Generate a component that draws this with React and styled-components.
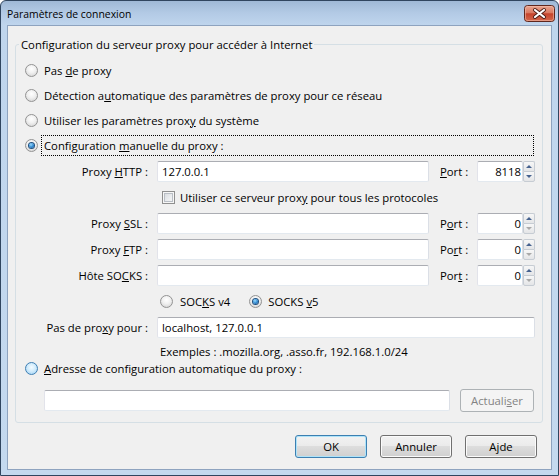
import React from "react";
import styled, { createGlobalStyle } from "styled-components";

const GlobalStyle = createGlobalStyle`
  html, body { margin: 0; padding: 0; background: #ffffff; }
  body {
    font-family: "Open Sans", "Noto Sans", "DejaVu Sans", sans-serif;
    font-size: 11.3px;
    color: #000000;
  }
  * { box-sizing: border-box; }
`;

// window chrome
const Window = styled.div`
  width: 559px;
  height: 476px;
  display: flex;
  flex-direction: column;
  border: 1px solid #30455f;
  border-radius: 6px 6px 0 0;
  padding: 0 6px 5px 6px;
  background: linear-gradient(180deg, #9fb8d6 0px, #b3cae5 12px, #bfd5ed 24px, #c4d9ef 100%);
`;

const TitleBar = styled.div`
  height: 24px;
  display: flex;
  align-items: flex-start;
  justify-content: space-between;
`;

const Title = styled.span`
  padding-top: 6px;
  line-height: 14px;
  font-size: 10.4px;
`;

const CloseButton = styled.div`
  flex: none;
  margin-top: 4px;
  margin-right: -3px;
  width: 31px;
  height: 17px;
  line-height: 0;
`;

const Client = styled.div`
  flex: 1;
  display: flex;
  flex-direction: column;
  background: #f0f0f0;
  border: 1px solid #8ea3bf;
`;

// group box
const GroupBox = styled.fieldset`
  margin: 11px 8px 0 7px;
  padding: 0 0 10px 0;
  min-width: 0;
  border: 1px solid #d5dfe5;
  border-radius: 3px;
`;

const Legend = styled.legend`
  margin-left: 3px;
  padding: 0 2px;
  line-height: 15px;
`;

const Inner = styled.div`
  padding: 6px 0 0 9px;
`;

const OptionRow = styled.div`
  height: ${(p) => p.$h || 25}px;
  display: flex;
  align-items: center;
`;

const OptionLabel = styled.span`
  margin-left: 3px;
  padding: 1px 2px;
  line-height: 17px;
  border: 1px dotted ${(p) => (p.$focus ? "#000000" : "transparent")};
  ${(p) => p.$focus && "flex: 1; margin-right: 8px;"}
`;

const RadioMark = styled.span`
  flex: none;
  position: relative;
  width: 13px;
  height: 13px;
  border-radius: 50%;
  border: 1px solid ${(p) => (p.$hot ? "#3f7fb3" : "#939393")};
  background: ${(p) =>
    p.$hot
      ? "radial-gradient(circle at 50% 40%, #f4fbff 0, #d2ecfc 45%, #98cef3 100%)"
      : "radial-gradient(circle at 50% 35%, #ffffff 0, #f0f0f0 45%, #cdcdcd 100%)"};
  &::after {
    content: "";
    display: ${(p) => (p.$checked ? "block" : "none")};
    position: absolute;
    left: 3px;
    top: 3px;
    width: 5px;
    height: 5px;
    border-radius: 50%;
    background: radial-gradient(circle at 40% 35%, #9bdcff 0, #2d86cf 55%, #0f4a86 100%);
    box-shadow: 0 0 0 1px #21507f;
  }
`;

const CheckMark = styled.span`
  flex: none;
  width: 13px;
  height: 13px;
  border: 1px solid #8f8f8f;
  background: linear-gradient(135deg, #d3d6db 0%, #eceef0 60%, #f8f8f8 100%);
  box-shadow: inset 0 0 0 1px #f6f6f6, inset 0 0 0 2px #b9bec5;
`;

const Key = styled.u`
  text-decoration: underline;
  text-underline-offset: 1px;
`;

// manual proxy grid
const ProxyGrid = styled.div`
  margin-top: 3px;
  display: grid;
  grid-template-columns: 125px 272px 34px 58px;
  grid-template-rows: repeat(7, 21px) 16px;
  column-gap: 7px;
  row-gap: 5px;
  align-items: center;
`;

const FieldLabel = styled.span`
  justify-self: end;
  padding-right: 2px;
`;

const PortLabel = styled.span`
  padding-left: 4px;
`;

const Field = styled.input`
  width: ${(p) => (p.$w ? `${p.$w}px` : "100%")};
  height: 21px;
  margin: 0;
  padding: 0 ${(p) => (p.$align === "right" ? 1 : 4)}px 0 4px;
  font: inherit;
  color: #000000;
  text-align: ${(p) => p.$align || "left"};
  background: #ffffff;
  border: 1px solid;
  border-color: #abadb3 #dbdfe6 #e3e9ef #e2e3ea;
  border-radius: 2px;
  outline: none;
`;

const Span = styled.div`
  grid-column: 2 / span 3;
  display: flex;
  align-items: center;
  padding-left: ${(p) => p.$pad || 0}px;
  gap: ${(p) => p.$gap || 0}px;
`;

const Choice = styled.span`
  display: flex;
  align-items: center;
  gap: ${(p) => p.$gap || 7}px;
`;

const PortBox = styled.div`
  display: flex;
  height: 21px;
`;

const Spinner = styled.div`
  width: 12px;
  display: flex;
  flex-direction: column;
`;

const SpinHalf = styled.div`
  flex: 1;
  display: flex;
  align-items: center;
  justify-content: center;
  border: 1px solid #c6ccd3;
  ${(p) => (p.$up ? "border-bottom: none; border-radius: 2px 2px 0 0;" : "border-radius: 0 0 2px 2px;")}
  background: linear-gradient(180deg, #f7f7f7, #e4e5e7);
  &::after {
    content: "";
    border-left: 3px solid transparent;
    border-right: 3px solid transparent;
    ${(p) =>
      p.$up
        ? `border-bottom: 3px solid ${p.$off ? "#a9a9a9" : "#46628f"};`
        : `border-top: 3px solid ${p.$off ? "#a9a9a9" : "#46628f"};`}
  }
`;

const UrlRow = styled.div`
  margin-top: 12px;
  padding-left: 19px;
  display: flex;
  align-items: center;
  gap: 10px;
  height: 23px;
`;

const Button = styled.button`
  width: ${(p) => p.$w || 72}px;
  height: 23px;
  padding: 0;
  font: inherit;
  color: #000000;
  border: 1px solid ${(p) => (p.$default ? "#3c7fb1" : "#707070")};
  border-radius: 3px;
  background: linear-gradient(180deg, #f2f2f2 0%, #ebebeb 46%, #dddddd 50%, #cfcfcf 100%);
  box-shadow: inset 0 0 0 1px ${(p) => (p.$default ? "#aee3f9" : "#fbfbfb")};
  &:disabled {
    color: #838383;
    border-color: #adb2b5;
    background: #f4f4f4;
    box-shadow: none;
  }
`;

const ButtonBar = styled.div`
  margin-top: 12px;
  padding-right: 14px;
  display: flex;
  justify-content: flex-end;
  gap: 13px;
`;

function Radio({ checked, hot, children, focus, h }) {
  return (
    <OptionRow $h={h}>
      <RadioMark $checked={checked} $hot={hot} />
      <OptionLabel $focus={focus}>{children}</OptionLabel>
    </OptionRow>
  );
}

function Port({ value, zero }) {
  return (
    <PortBox>
      <Field $w={46} $align="right" defaultValue={value} />
      <Spinner>
        <SpinHalf $up />
        <SpinHalf $off={zero} />
      </Spinner>
    </PortBox>
  );
}

function CloseGlyph() {
  return (
    <svg width="31" height="17" viewBox="0 0 31 17">
      <defs>
        <linearGradient id="closeFace" x1="0" y1="0" x2="0" y2="1">
          <stop offset="0" stopColor="#eaa792" />
          <stop offset="0.45" stopColor="#d97a62" />
          <stop offset="0.52" stopColor="#c5432b" />
          <stop offset="1" stopColor="#d46a4e" />
        </linearGradient>
      </defs>
      <rect x="0.5" y="0.5" width="30" height="16" rx="3" fill="url(#closeFace)" stroke="#5f271d" />
      <rect x="1.5" y="1.5" width="28" height="14" rx="2" fill="none" stroke="#f3c2b3" strokeOpacity="0.55" />
      <path d="M11 5 L20 12 M20 5 L11 12" stroke="#4a1c14" strokeWidth="4" strokeLinecap="round" />
      <path d="M11 5 L20 12 M20 5 L11 12" stroke="#ffffff" strokeWidth="2.2" strokeLinecap="round" />
    </svg>
  );
}

export default function App() {
  return (
    <>
      <GlobalStyle />
      <Window>
        <TitleBar>
          <Title>Paramètres de connexion</Title>
          <CloseButton>
            <CloseGlyph />
          </CloseButton>
        </TitleBar>
        <Client>
          <GroupBox>
            <Legend>Configuration du serveur proxy pour accéder à Internet</Legend>
            <Inner>
              <Radio>Pas <Key>d</Key>e proxy</Radio>
              <Radio>Détection a<Key>u</Key>tomatique des paramètres de proxy pour ce réseau</Radio>
              <Radio>Utiliser les paramètres prox<Key>y</Key> du système</Radio>
              <Radio checked focus>Configuration <Key>m</Key>anuelle du proxy :</Radio>

              <ProxyGrid>
                <FieldLabel>Proxy <Key>H</Key>TTP :</FieldLabel>
                <Field defaultValue="127.0.0.1" />
                <PortLabel><Key>P</Key>ort :</PortLabel>
                <Port value="8118" />

                <Span $pad={5} $gap={5}>
                  <CheckMark />
                  <span>Utiliser ce serveur prox<Key>y</Key> pour tous les protocoles</span>
                </Span>

                <FieldLabel>Proxy <Key>S</Key>SL :</FieldLabel>
                <Field />
                <PortLabel>P<Key>o</Key>rt :</PortLabel>
                <Port value="0" zero />

                <FieldLabel>Proxy <Key>F</Key>TP :</FieldLabel>
                <Field />
                <PortLabel>Po<Key>r</Key>t :</PortLabel>
                <Port value="0" zero />

                <FieldLabel>Hôte SO<Key>C</Key>KS :</FieldLabel>
                <Field />
                <PortLabel>Por<Key>t</Key> :</PortLabel>
                <Port value="0" zero />

                <Span $pad={3} $gap={19}>
                  <Choice>
                    <RadioMark />
                    <span>SOC<Key>K</Key>S v4</span>
                  </Choice>
                  <Choice $gap={6}>
                    <RadioMark $checked />
                    <span>SOCKS <Key>v</Key>5</span>
                  </Choice>
                </Span>

                <FieldLabel>Pas de pro<Key>x</Key>y pour :</FieldLabel>
                <Span>
                  <Field defaultValue="localhost, 127.0.0.1" />
                </Span>

                <Span $pad={3}>Exemples : .mozilla.org, .asso.fr, 192.168.1.0/24</Span>
              </ProxyGrid>

              <Radio hot h={18}><Key>A</Key>dresse de configuration automatique du proxy :</Radio>
              <UrlRow>
                <Field $w={406} />
                <Button $w={74} disabled>Actuali<Key>s</Key>er</Button>
              </UrlRow>
            </Inner>
          </GroupBox>
          <ButtonBar>
            <Button $default>OK</Button>
            <Button>Annuler</Button>
            <Button>A<Key>j</Key>de</Button>
          </ButtonBar>
        </Client>
      </Window>
    </>
  );
}
